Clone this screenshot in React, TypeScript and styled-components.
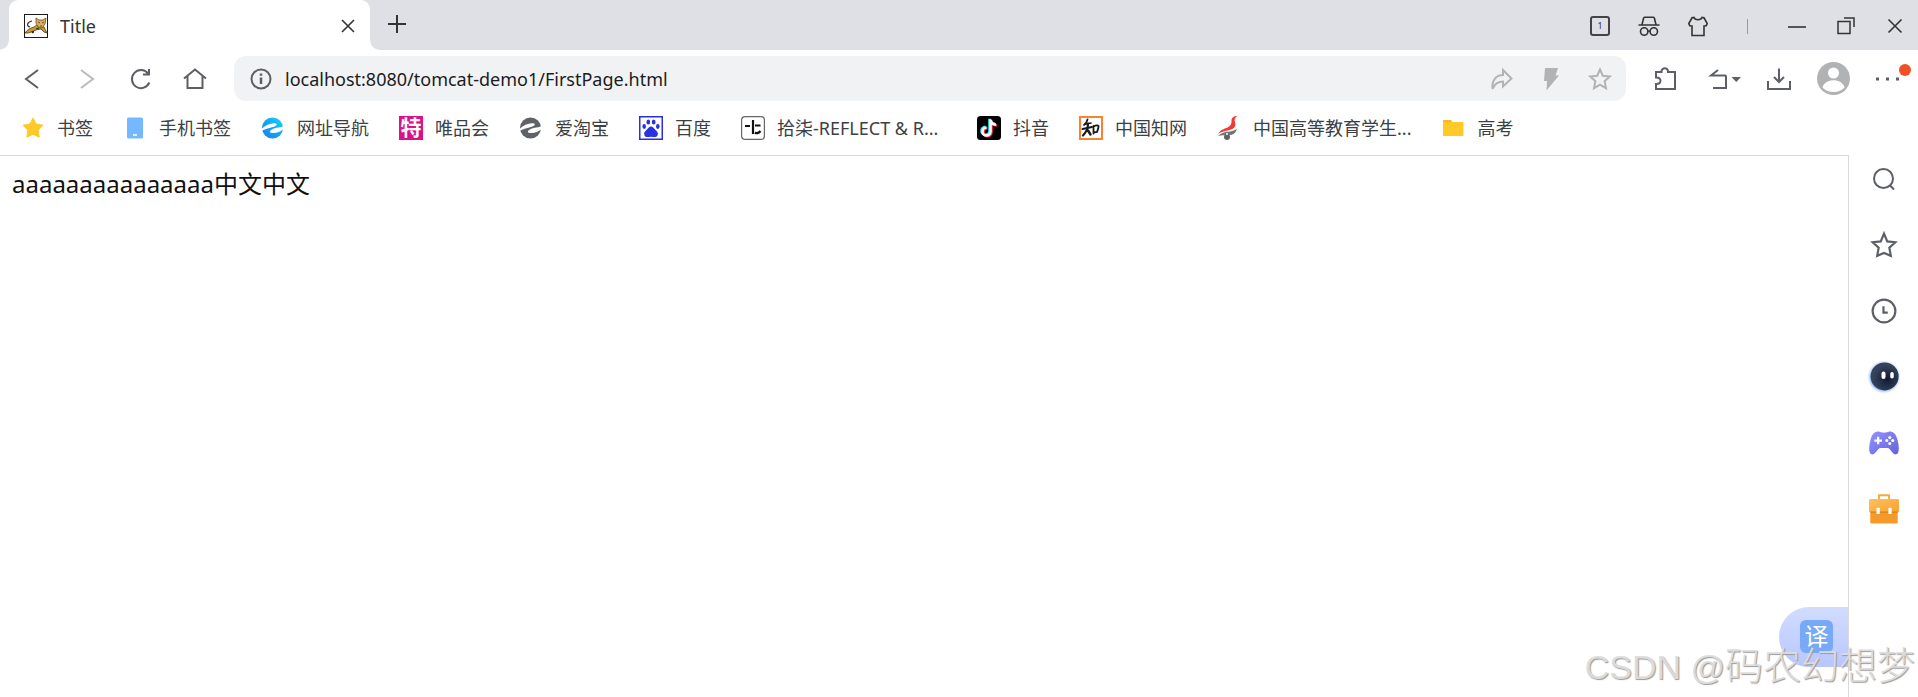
import React from "react";
import styled, { createGlobalStyle, css } from "styled-components";

const sans = `"Noto Sans", "Noto Sans CJK SC", sans-serif`;

const GlobalStyle = createGlobalStyle`
  *, *::before, *::after { box-sizing: border-box; }
  body { margin: 0; background: #fff; font-family: ${sans}; }
  button { border: 0; padding: 0; background: none; font: inherit; color: inherit; cursor: pointer; }
  svg { display: block; overflow: visible; }
`;

const Window = styled.div`
  display: flex;
  flex-direction: column;
  min-height: 100vh;
  position: relative;
  overflow: hidden;
`;

const TabStrip = styled.header`
  display: flex;
  align-items: center;
  height: 50px;
  padding-left: 9px;
  background: #dfe0e6;
`;

const Tab = styled.div`
  display: flex;
  align-items: center;
  align-self: stretch;
  position: relative;
  width: 361px;
  padding: 2px 15px 0;
  gap: 12px;
  background: #fff;
  border-radius: 9px 9px 0 0;
  &::before, &::after {
    content: "";
    position: absolute;
    bottom: 0;
    width: 9px;
    height: 9px;
  }
  &::before { left: -9px; background: radial-gradient(circle at 0 0, transparent 8px, #fff 9px); }
  &::after { right: -9px; background: radial-gradient(circle at 100% 0, transparent 8px, #fff 9px); }
`;

const TabTitle = styled.span`
  flex: 1;
  font-size: 18px;
  line-height: 24px;
  color: #333;
`;

const IconButton = styled.button<{ $w?: number; $color?: string }>`
  display: flex;
  align-items: center;
  justify-content: center;
  flex: none;
  width: ${(p) => p.$w ?? 24}px;
  height: 36px;
  color: ${(p) => p.$color ?? "#5c6066"};
`;

const WindowControls = styled.div`
  display: flex;
  align-items: center;
  margin-left: auto;
  padding: 2px 0 0;
`;

const CountBox = styled.span`
  width: 20px;
  height: 20px;
  border: 2px solid #444;
  border-radius: 3px;
  font-size: 9px;
  line-height: 16px;
  text-align: center;
`;

const Divider = styled.span`
  width: 1px;
  height: 15px;
  margin: 0 24px;
  background: #9a9ba0;
`;

const Toolbar = styled.nav`
  display: flex;
  align-items: center;
  height: 57px;
`;

const NavGroup = styled.div`
  display: flex;
  flex: none;
  width: 234px;
  padding-left: 5px;
`;

const AddressBar = styled.div`
  display: flex;
  align-items: center;
  flex: 1;
  height: 45px;
  padding: 0 2px 0 9px;
  background: #f1f2f4;
  border-radius: 12px;
`;

const AddressInput = styled.input`
  flex: 1;
  min-width: 0;
  padding: 0 0 0 6px;
  border: 0;
  outline: 0;
  background: none;
  font: 18px/24px ${sans};
  color: #1c1c1e;
`;

const ToolGroup = styled.div`
  display: flex;
  align-items: center;
  flex: none;
  width: 292px;
  padding-left: 12px;
`;

const MenuButton = styled(IconButton)`
  position: relative;
  &::after {
    content: "";
    position: absolute;
    top: 3px;
    right: 7px;
    width: 12px;
    height: 12px;
    border-radius: 50%;
    background: #f05023;
  }
`;

const Bookmarks = styled.nav`
  display: flex;
  align-items: center;
  gap: 30px;
  height: 48px;
  padding: 0 21px 6px;
`;

const Bookmark = styled.a`
  display: flex;
  align-items: center;
  gap: 12px;
  flex: none;
  color: #3c3f44;
  font-size: 18px;
  line-height: 24px;
  text-decoration: none;
  white-space: nowrap;
`;

const BookmarkLabel = styled.span<{ $width?: number }>`
  width: ${(p) => (p.$width ? `${p.$width}px` : "auto")};
`;

const Content = styled.div`
  display: flex;
  flex: 1;
`;

const Page = styled.main`
  flex: 1;
  padding: 12px;
  border-top: 1px solid #d9d9dc;
  border-right: 1px solid #d9d9dc;
  font-size: 24px;
  line-height: 32px;
  color: #111;
`;

const SideBar = styled.aside`
  display: flex;
  flex-direction: column;
  align-items: center;
  gap: 30px;
  width: 69px;
  padding-top: 6px;
`;

const Translate = styled.button`
  display: flex;
  align-items: center;
  position: absolute;
  right: 70px;
  bottom: 30px;
  width: 69px;
  height: 60px;
  padding-left: 21px;
  border-radius: 30px 0 0 30px;
  background: linear-gradient(#d1dcff, #b9c6ff);
`;

const TranslateTile = styled.span`
  width: 33px;
  height: 33px;
  margin-bottom: 2px;
  border-radius: 6px;
  background: #78a9f7;
  color: #fff;
  font-size: 24px;
  line-height: 32px;
  text-align: center;
`;

const Watermark = styled.span`
  position: absolute;
  right: 3px;
  bottom: 6px;
  font: 300 34px/48px "Liberation Sans", "Noto Sans CJK SC", sans-serif;
  color: rgba(222, 222, 222, 0.95);
  text-shadow: 1px 1px 1px #999;
  white-space: nowrap;
  pointer-events: none;
`;

const WatermarkName = styled.span`
  font-size: 38px;
`;

const lineStyle = css`
  fill: none;
  stroke: currentColor;
  stroke-width: 2;
`;
const Line = styled.svg<{ $thin?: boolean }>`
  ${lineStyle}
  ${(p) => p.$thin && "stroke-width: 1.6;"}
`;

const Svg = ({ size = 24, thin, children }: { size?: number; thin?: boolean; children: React.ReactNode }) => (
  <Line width={size} height={size} viewBox="0 0 24 24" $thin={thin} aria-hidden="true">
    {children}
  </Line>
);

const Art = ({ size = 24, children }: { size?: number; children: React.ReactNode }) => (
  <svg width={size} height={size} viewBox="0 0 24 24" aria-hidden="true">
    {children}
  </svg>
);

const starPath = "M12 2.500l2.800 6.200 7 .8-5.200 4.700 1.400 7-6-3.500-6 3.500 1.400-7-5.200-4.700 7-.8z";

const TomcatIcon = () => (
  <Art>
    <rect x=".5" y=".5" width="23" height="23" fill="#fff" stroke="#1a1a1a" />
    <path d="M8 7C3 8 2 12 6 13M9 15l-2 3" fill="none" stroke="#333" strokeWidth="1.2" />
    <path d="M1 19c2-3 5-5 9-6l3-2 7 2c1 2 2 4 3 6l-3-1-3-3-5 1-5 2-3 1z" fill="#cd9638" stroke="#4f3d1d" strokeWidth=".8" />
    <path d="M12 4l3 2h4l3-2-1 6-3 4-4-1-2-4z" fill="#dfb04c" stroke="#66501f" strokeWidth=".8" />
    <path d="M14 8l2 1m4-1l-2 1m-2 3h2" stroke="#555" />
    <path d="M9 17l-1 2 2-1zM12 15l3-1" fill="#222" stroke="#222" />
  </Art>
);

const SwirlIcon = ({ blue }: { blue?: boolean }) => (
  <Art>
    <defs>
      <linearGradient id="swirl" x1="0" y1="1" x2="1" y2="0">
        <stop offset="0" stopColor="#1a7df0" />
        <stop offset=".5" stopColor="#12a5f3" />
        <stop offset="1" stopColor="#18d9fa" />
      </linearGradient>
    </defs>
    <circle cx="11.500" cy="12" r="10.500" fill={blue ? "url(#swirl)" : "#5f6368"} />
    <path d="M0 13.500C4 9.500 9 7.300 13 7.300c3.500 0 3.500 1.700 1 3C10.500 12 5 12 0 15.500z" fill="#fff" />
    <path d="M24 9.500c-4 2.500-9 1.500-13.500 4.200-2.500 1.600-2 3.300 1.500 3.300 4.500 0 8.500-2 12-5z" fill="#fff" />
  </Art>
);

const BadgeIcon = styled.span`
  width: 24px;
  height: 24px;
  background: #d9118b;
  color: #fff;
  font-size: 21px;
  font-weight: 700;
  line-height: 23px;
  text-align: center;
`;

const CnkiIcon = () => (
  <Art>
    <rect x="1" y="1" width="22" height="22" fill="#fff" stroke="#f58436" strokeWidth="2" />
    <g fill="none" stroke="#1a1a1a" strokeLinecap="round">
      <path d="M8.500 3.500C8 6 6.500 8 5 9" strokeWidth="1.800" />
      <path d="M6 8.200l6-1.200" strokeWidth="1.600" />
      <path d="M3.500 13l9.500-2" strokeWidth="2" />
      <path d="M9 7.500c0 5-2 9-5 12" strokeWidth="2.200" />
      <path d="M9 14.500l2.500 4" strokeWidth="2.400" />
      <path d="M14.500 10v7.500M14.500 10.500c3-1.500 5.500-1.500 5 .5-.3 2-1 3.500-1.500 5l-3.500.5" strokeWidth="1.800" />
    </g>
  </Art>
);

const bookmarks: { label: string; icon: React.ReactNode; width?: number }[] = [
  { label: "书签", icon: <Art><path d="M12 2l3.100 6 6.900 1.200-4.800 5 1 7L12 18.200l-6.200 3 1-7-4.800-5L8.900 8z" fill="#ffc928" stroke="#ffc928" strokeLinejoin="round" /></Art> },
  { label: "手机书签", icon: <Art><rect x="4" y="1.500" width="16" height="21" rx="1.500" fill="#74b9ff" /><path d="M10 19h4" stroke="#fff" strokeWidth="1.600" /></Art> },
  { label: "网址导航", icon: <SwirlIcon blue /> },
  { label: "唯品会", icon: <BadgeIcon aria-hidden="true">特</BadgeIcon> },
  { label: "爱淘宝", icon: <SwirlIcon /> },
  {
    label: "百度",
    icon: (
      <Art>
        <rect x=".75" y=".75" width="22.500" height="22.500" fill="#fff" stroke="#2a2edb" strokeWidth="1.500" />
        <g fill="#2932e1">
          <ellipse cx="5.200" cy="10.500" rx="1.800" ry="2.400" /><ellipse cx="9.300" cy="5.900" rx="1.900" ry="2.500" />
          <ellipse cx="14.700" cy="5.900" rx="1.900" ry="2.500" /><ellipse cx="18.800" cy="10.500" rx="1.800" ry="2.400" />
          <path d="M12 10.500c2 0 3 2 4.500 3.500 2 2 3 3 2 5.500-1 2-3.500 1.500-6.500 1.200-3 .3-5.500.8-6.500-1.200-1-2.500 0-3.500 2-5.500C9 12.500 10 10.500 12 10.500z" />
        </g>
      </Art>
    ),
  },
  {
    label: "拾柒-REFLECT & R...",
    width: 170,
    icon: (
      <Art>
        <rect x=".6" y=".6" width="22.800" height="22.800" rx="3.500" fill="#fff" stroke="#666" strokeWidth="1.200" />
        <path d="M4 10h5M14 9.500h5.500M14 16.500c2 1.500 4 .5 5.500-1.500" fill="none" stroke="#111" strokeWidth="2.200" />
        <path d="M12 4v14" stroke="#111" strokeWidth="2.200" />
      </Art>
    ),
  },
  {
    label: "抖音",
    icon: (
      <Art>
        <rect width="24" height="24" rx="3.500" fill="#000" />
        {[["#25f4ee", -1, -0.8], ["#fe2c55", 1, 0.8], ["#fff", 0, 0]].map(([color, x, y]) => (
          <path key={color as string} transform={`translate(${x} ${y})`} d="M13.500 3.500v12a4 4 0 1 1-4-4M13.500 4c.5 3 2 4.500 5.500 4.700" fill="none" stroke={color as string} strokeWidth="2.600" />
        ))}
      </Art>
    ),
  },
  { label: "中国知网", icon: <CnkiIcon /> },
  {
    label: "中国高等教育学生...",
    icon: (
      <Art>
        <path d="M20 0c-3 0-6 2-5.500 5 .3 3-1 5-4 6.500C7 13 3 14 1 18c4-3 9-3 13-4.500 4-1.500 5-4 4-7-.7-2.500-.5-4.500 2-6.500z" fill="#f23a32" />
        <path d="M1 20c4-4 8-4 12-4.500 3-.5 5-1 7-3-1 4-3 6-6 6.500-4 .6-9-.5-13 1z" fill="#70757a" />
        <circle cx="10" cy="21" r="3" fill="#5f6368" /><circle cx="10" cy="18" r="1" fill="#fff" />
      </Art>
    ),
  },
  {
    label: "高考",
    icon: <Art><path d="M2 4h8l2 3H2z" fill="#ffb22c" /><path d="M2 6h19.500c.6 0 1 .4 1 1v12c0 .6-.4 1-1 1H3c-.6 0-1-.4-1-1z" fill="#ffc928" /></Art>,
  },
];

const sideItems: { label: string; icon: React.ReactNode }[] = [
  { label: "搜索", icon: <Svg><circle cx="11.500" cy="11.500" r="9.500" /><path d="M18 18.500l4 4" /></Svg> },
  { label: "收藏", icon: <Svg size={26}><path d="M12 1.500l3 7.200 7.500.8-5.600 5 1.400 7.500-6.300-2.700L5.700 22l1.400-7.500-5.600-5 7.500-.8z" /></Svg> },
  { label: "历史", icon: <Svg size={26}><circle cx="12" cy="12" r="10.500" /><path d="M11.500 7.500v6h4" /></Svg> },
  {
    label: "助手",
    icon: (
      <Art size={30}>
        <defs>
          <radialGradient id="orb" cx=".6" cy=".6"><stop offset="0" stopColor="#101b33" /><stop offset="1" stopColor="#34425a" /></radialGradient>
          <radialGradient id="glow"><stop offset=".78" stopColor="#8eb5f8" /><stop offset="1" stopColor="#d5e0ff" stopOpacity="0" /></radialGradient>
        </defs>
        <circle cx="12" cy="12" r="13.500" fill="url(#glow)" />
        <circle cx="12.500" cy="11.500" r="11.200" fill="url(#orb)" />
        <rect x="10" y="7.500" width="3.200" height="6" rx="1.600" fill="#fff" /><rect x="17" y="8" width="2.800" height="5.200" rx="1.400" fill="#fff" />
      </Art>
    ),
  },
  {
    label: "游戏",
    icon: (
      <Art size={30}>
        <defs><linearGradient id="pad" x1="0" y1="0" x2="1" y2="1"><stop offset="0" stopColor="#9394ff" /><stop offset="1" stopColor="#6462dc" /></linearGradient></defs>
        <path d="M6 3c2-.8 4 .8 6 .8S16 2.200 18 3c3 .8 4.300 4 5.300 8.500.8 4 .9 8.500-1.300 9.500-3 1-5-5-7-5H9c-2 0-4 6-7 5-2.200-1-2.100-5.500-1.300-9.500C1.700 7 3 3.800 6 3z" fill="url(#pad)" />
        <path d="M7.300 7v6M4.300 10h6" stroke="#fff" strokeWidth="1.800" />
        <g fill="#fff"><circle cx="16.600" cy="7.500" r="1.200" /><circle cx="16.600" cy="12.300" r="1.200" /><circle cx="14.200" cy="9.900" r="1.200" /><circle cx="19" cy="9.900" r="1.200" /></g>
      </Art>
    ),
  },
  {
    label: "工具箱",
    icon: (
      <Art size={30}>
        <defs><linearGradient id="case" x2="1" y2="1"><stop stopColor="#ffc060" /><stop offset="1" stopColor="#f9a22a" /></linearGradient></defs>
        <path d="M8 4V1h8v3" fill="none" stroke="#f9a83b" strokeWidth="1.500" />
        <rect x="1" y="13" width="22" height="10.500" rx="1" fill="#f39a2b" />
        <rect x="0" y="4" width="24" height="10.500" rx="1" fill="url(#case)" />
        <path d="M1 14.500h22" stroke="#d98116" />
        <rect x="6" y="11" width="2.600" height="5" rx=".6" fill="#fff" /><rect x="15.500" y="11" width="2.600" height="5" rx=".6" fill="#fff" />
      </Art>
    ),
  },
];

export default function App() {
  return (
    <Window>
      <GlobalStyle />
      <TabStrip>
        <Tab>
          <TomcatIcon />
          <TabTitle>Title</TabTitle>
          <IconButton $w={14} $color="#333" aria-label="关闭标签页">
            <Svg thin><path d="M6 6l12 12M18 6L6 18" /></Svg>
          </IconButton>
        </Tab>
        <IconButton $w={54} $color="#333" aria-label="新建标签页">
          <Svg><path d="M12 2v18M3 11h18" /></Svg>
        </IconButton>
        <WindowControls>
          <IconButton $w={48} $color="#333" aria-label="标签页数量">
            <CountBox>1</CountBox>
          </IconButton>
          <IconButton $w={49} $color="#333" aria-label="无痕模式">
            <Svg thin>
              <path d="M1.500 11h21M5 10.500c.5-2 1-3.500 1.500-6 .2-1 .5-1.200 1-1.200h9c.5 0 .8.200 1 1.200.5 2.500 1 4 1.500 6M11 17.500c.5-.7 1.500-.7 2 0" />
              <circle cx="7.200" cy="17.500" r="3.700" /><circle cx="16.800" cy="17.500" r="3.700" />
            </Svg>
          </IconButton>
          <IconButton $w={50} $color="#333" aria-label="皮肤">
            <Svg thin><path d="M8 3.500c1 3 7 3 8 0l2 .3 3.200 5.700-1 2.200-2.200.3v9.500H6V12l-2.200-.3-1-2.200L6 3.800z" /></Svg>
          </IconButton>
          <Divider />
          <IconButton $w={49} $color="#333" aria-label="最小化"><Svg thin><path d="M3 13h18" /></Svg></IconButton>
          <IconButton $w={50} $color="#333" aria-label="还原"><Svg><path d="M4 7.500h12v12H4zM10 4h10v9" strokeWidth="1.500" /></Svg></IconButton>
          <IconButton $w={47} $color="#333" aria-label="关闭"><Svg thin><path d="M5.500 5.500l13 13M18.500 5.500l-13 13" /></Svg></IconButton>
        </WindowControls>
      </TabStrip>

      <Toolbar>
        <NavGroup>
          <IconButton $w={54} aria-label="后退"><Svg><path d="M18 3L6 12l12 9" /></Svg></IconButton>
          <IconButton $w={56} $color="#b9babd" aria-label="前进"><Svg><path d="M6 3l12 9-12 9" /></Svg></IconButton>
          <IconButton $w={52} aria-label="刷新"><Svg><path d="M20.300 15.500A9 9 0 1 1 19 6.500M20 2v5.500h-6" /></Svg></IconButton>
          <IconButton $w={56} aria-label="主页"><Svg><path d="M1 11.500L12 2.500l11 9M4.500 9v12h15V9" /></Svg></IconButton>
        </NavGroup>
        <AddressBar>
          <IconButton $w={36} aria-label="网站信息">
            <Svg><circle cx="12" cy="12" r="9.500" /><path d="M12 10.500v6.500M12 6.500v2.200" strokeWidth="2.500" /></Svg>
          </IconButton>
          <AddressInput aria-label="地址栏" defaultValue="localhost:8080/tomcat-demo1/FirstPage.html" />
          <IconButton $w={49} $color="#b2b3b5" aria-label="分享">
            <Svg><path d="M13 3l8.500 8.500-8.500 8v-5C8 14.500 4.500 17 2.500 22c-1-9 4-14 10.500-14z" /></Svg>
          </IconButton>
          <IconButton $w={49} $color="#b2b3b5" aria-label="极速模式">
            <Svg><path d="M6 1h13l-2.500 7.500H20L7.500 23.500 8 14H5z" fill="currentColor" stroke="none" /></Svg>
          </IconButton>
          <IconButton $w={49} $color="#b2b3b5" aria-label="收藏此页"><Svg><path d={starPath} /></Svg></IconButton>
        </AddressBar>
        <ToolGroup>
          <IconButton $w={54} aria-label="扩展"><Svg><path d="M3 5h5.500c-.3-5 7-5 6.500 0h7v17H3v-5c6 .5 6-7 0-6.500z" /></Svg></IconButton>
          <IconButton $w={60} aria-label="撤销">
            <Svg><path d="M8 3L1 8.500h14c.8 0 1 .3 1 1v11.500H3" /><path d="M21.500 10h9.500l-4.700 5z" fill="currentColor" stroke="none" /></Svg>
          </IconButton>
          <IconButton $w={54} aria-label="下载"><Svg><path d="M12 1.500V15M7 10l5 5 5-5M1 14v8h22v-8" /></Svg></IconButton>
          <IconButton $w={54} $color="#b1b2b3" aria-label="用户">
            <Art size={33}>
              <circle cx="12" cy="12" r="12" fill="currentColor" />
              <circle cx="12" cy="8" r="4" fill="#fff" />
              <path d="M4 18.500c2-7 14-7 16 0-4 4.500-12 4.500-16 0z" fill="#fff" />
            </Art>
          </IconButton>
          <MenuButton $w={58} aria-label="菜单">
            <Svg><path d="M-1 12h3M9 12h3M19 12h3" strokeWidth="3" /></Svg>
          </MenuButton>
        </ToolGroup>
      </Toolbar>

      <Bookmarks aria-label="书签栏">
        {bookmarks.map((b) => (
          <Bookmark key={b.label} href="#">
            {b.icon}
            <BookmarkLabel $width={b.width}>{b.label}</BookmarkLabel>
          </Bookmark>
        ))}
      </Bookmarks>

      <Content>
        <Page>aaaaaaaaaaaaaaa中文中文</Page>
        <SideBar>
          {sideItems.map((s) => (
            <IconButton key={s.label} $w={36} aria-label={s.label}>{s.icon}</IconButton>
          ))}
        </SideBar>
      </Content>

      <Translate aria-label="翻译"><TranslateTile>译</TranslateTile></Translate>
      <Watermark>CSDN @<WatermarkName>码农幻想梦</WatermarkName></Watermark>
    </Window>
  );
}
